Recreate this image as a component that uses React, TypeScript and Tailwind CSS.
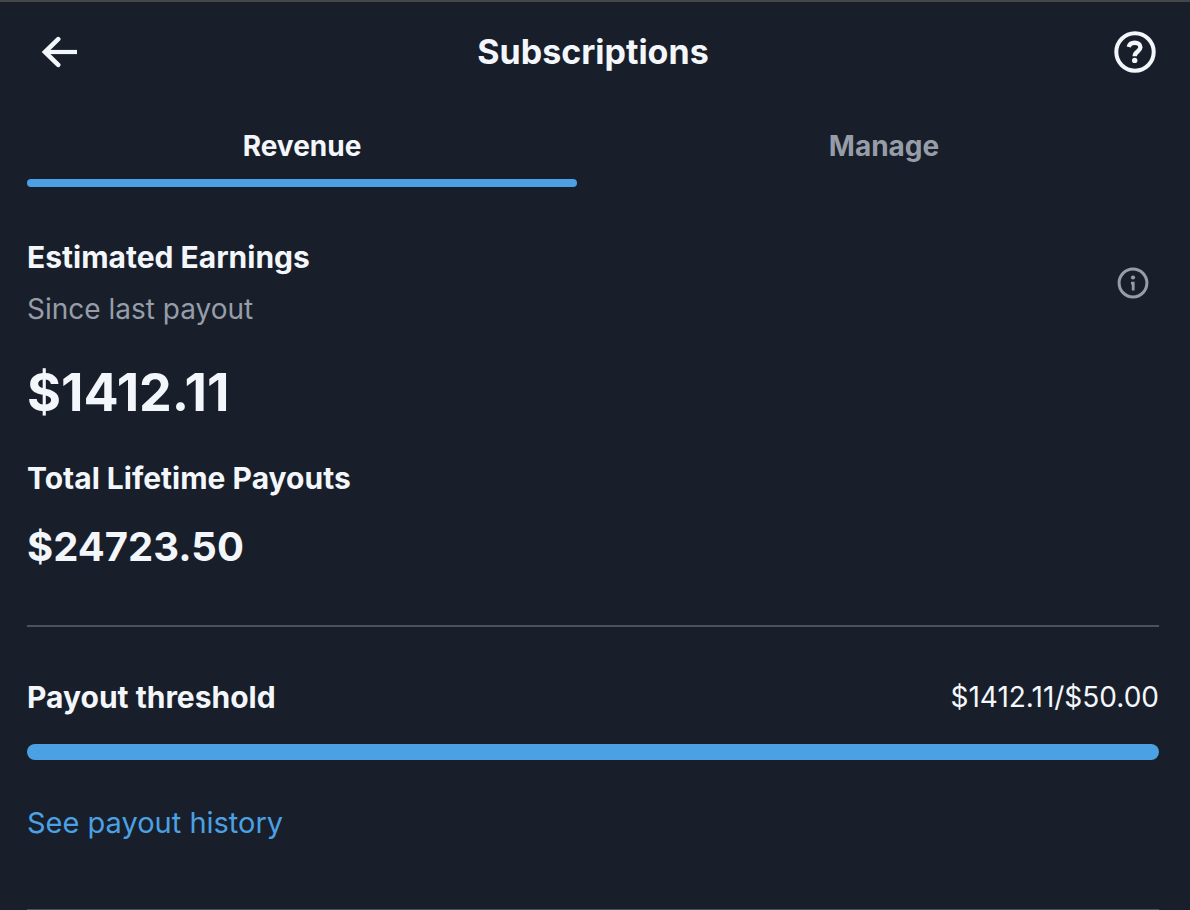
import React from "react";

const earnings = "$1412.11";

export default function App() {
  return (
    <main className="min-h-screen overflow-hidden border-t-2 border-[#454648] bg-[#181f2a] font-['Inter',sans-serif] text-[#f3f6fa]">
      <header className="grid h-[100px] grid-cols-[1fr_auto_1fr] items-center pr-[31px] pl-[27px]">
        <button type="button" aria-label="Back" className="ml-[14px] flex justify-self-start">
          <svg viewBox="0 0 38 32" className="h-8 w-[38px]" fill="none" stroke="currentColor">
            <path d="M17.2 3.200 4 16l13.200 12.800" strokeWidth="4.600" strokeLinecap="round" />
            <path d="M4 16h32" strokeWidth="4.200" />
          </svg>
        </button>
        <h1 className="text-[34px] leading-10 font-bold">Subscriptions</h1>
        <button type="button" aria-label="Help" className="mr-[3px] flex justify-self-end">
          <svg viewBox="0 0 42 42" className="size-[42px]" fill="none" stroke="currentColor">
            <circle cx="21" cy="21" r="18.700" strokeWidth="4" />
            <path d="M14.800 16c.5-2.700 2.900-4.200 6-4.200 3.300 0 5.600 1.700 5.600 4.500 0 4.200-5.700 4.200-5.700 8.900" strokeWidth="4.400" />
            <circle cx="20.700" cy="29.400" r="2.700" fill="currentColor" stroke="none" />
          </svg>
        </button>
      </header>
      <nav className="flex gap-8 pr-[31px] pl-[27px]" role="tablist">
        <button type="button" role="tab" aria-selected="true" className="flex-1 text-[28px] leading-[34px] font-bold">
          <span className="block pt-[27px] pb-4">Revenue</span>
          <span className="block h-2 rounded-full bg-[#4ba1e3]" />
        </button>
        <button type="button" role="tab" aria-selected="false" className="flex-1 text-[28px] leading-[34px] font-bold text-[#979da8]">
          <span className="block pt-[27px] pb-4">Manage</span>
          <span className="block h-2" />
        </button>
      </nav>
      <div className="pr-[31px] pl-[27px]">
        <section className="pt-[50px] pb-[53px]">
          <div className="flex items-center justify-between">
            <div>
              <h2 className="text-[30px] leading-10 font-bold">Estimated Earnings</h2>
              <p className="mt-3 text-[28px] leading-10 text-[#979da8]">Since last payout</p>
            </div>
            <button type="button" aria-label="About estimated earnings" className="mr-[10px]">
              <svg viewBox="0 0 32 32" className="size-8" fill="none" stroke="#979da8" strokeWidth="3">
                <circle cx="16" cy="16" r="13.900" />
                <path d="M14 16.200h2.200v7.200" strokeWidth="2.800" />
                <circle cx="16" cy="10.500" r="2.100" fill="#979da8" stroke="none" />
              </svg>
            </button>
          </div>
          <p className="mt-8 text-[52px] leading-[64px] font-bold">{earnings}</p>
          <h2 className="mt-[33px] text-[30px] leading-10 font-bold">Total Lifetime Payouts</h2>
          <p className="mt-6 text-[40px] leading-[50px] font-bold">$24723.50</p>
        </section>
        <section className="border-y-2 border-[#4a525e] pt-[50px] pb-[66px]">
          <div className="flex items-center justify-between">
            <h2 className="text-[30px] leading-10 font-bold">Payout threshold</h2>
            <p className="text-[28px] leading-10">{earnings}/$50.00</p>
          </div>
          <div role="progressbar" aria-label="Payout threshold" aria-valuenow={100} className="mt-[27px] h-4 rounded-full bg-[#4ba1e3]" />
          <a href="#history" className="mt-[43px] block w-fit text-[29px] leading-10 text-[#4ba1e3]">See payout history</a>
        </section>
      </div>
    </main>
  );
}
